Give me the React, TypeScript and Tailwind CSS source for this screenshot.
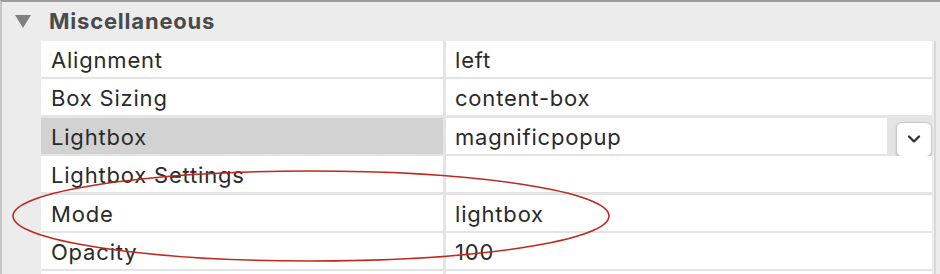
import { ChevronDown } from 'lucide-react';

type Row = { label: string; value: string; selected?: boolean; select?: boolean };

const rows: Row[] = [
  { label: 'Alignment', value: 'left' },
  { label: 'Box Sizing', value: 'content-box' },
  { label: 'Lightbox', value: 'magnificpopup', selected: true, select: true },
  { label: 'Lightbox Settings', value: '' },
  { label: 'Mode', value: 'lightbox' },
  { label: 'Opacity', value: '100' },
  { label: '', value: '' },
];

const PropertyRow = ({ row }: { row: Row }) => (
  <div className="flex h-[36px] mb-[2.4px] items-start">
    <div
      className={`w-[402px] h-full flex items-center pl-[10px] pt-[3px] ${
        row.selected ? 'bg-[#d2d2d2]' : 'bg-white'
      }`}
    >
      {row.label}
    </div>
    <div className="w-[3px]" />
    <div className="flex-1 h-full bg-white flex items-center pl-[9px] pt-[3px]">{row.value}</div>
    {row.select && (
      <div className="w-[45px] h-full pl-[9px] pt-[4px]">
        <button className="w-[36px] h-[35px] bg-white border border-[#c9c9c9] rounded-[6px] shadow-[0_1px_2px_rgba(0,0,0,0.2)] flex items-center justify-center text-[#333]">
          <ChevronDown size={20} strokeWidth={2.8} />
        </button>
      </div>
    )}
  </div>
);

export default function App() {
  return (
    <div
      className="relative w-[940px] h-[274px] overflow-hidden bg-[#ececec] border-t-2 border-t-[#9c9c9c] border-l-2 border-l-[#c6c6c6] text-[22px] tracking-[0.8px] text-[#2a2a2a]"
      style={{ fontFamily: 'Inter, "Liberation Sans", sans-serif' }}
    >
      <div className="h-[39px] flex items-center pl-[13px] gap-[18px]">
        <svg width="16" height="13" viewBox="0 0 16 13">
          <polygon points="0,0 16,0 8,13" fill="#7f7f7f" />
        </svg>
        <span className="font-bold text-[#4a4a4a]">Miscellaneous</span>
      </div>
      <div className="flex">
        <div className="w-[39px]" />
        <div className="w-[891px] bg-[#e4e4e4]">
          {rows.map((r, i) => (
            <PropertyRow key={i} row={r} />
          ))}
        </div>
        <div className="w-[2px]" />
        <div className="w-[2px] h-[240px] bg-[#d8d8d8]" />
      </div>
      <svg className="absolute left-0 top-0 pointer-events-none" width="940" height="274" viewBox="-2 -2 940 274">
        <ellipse cx="307" cy="212" rx="298" ry="45" fill="none" stroke="#c0281e" strokeWidth="1.6" />
      </svg>
    </div>
  );
}
